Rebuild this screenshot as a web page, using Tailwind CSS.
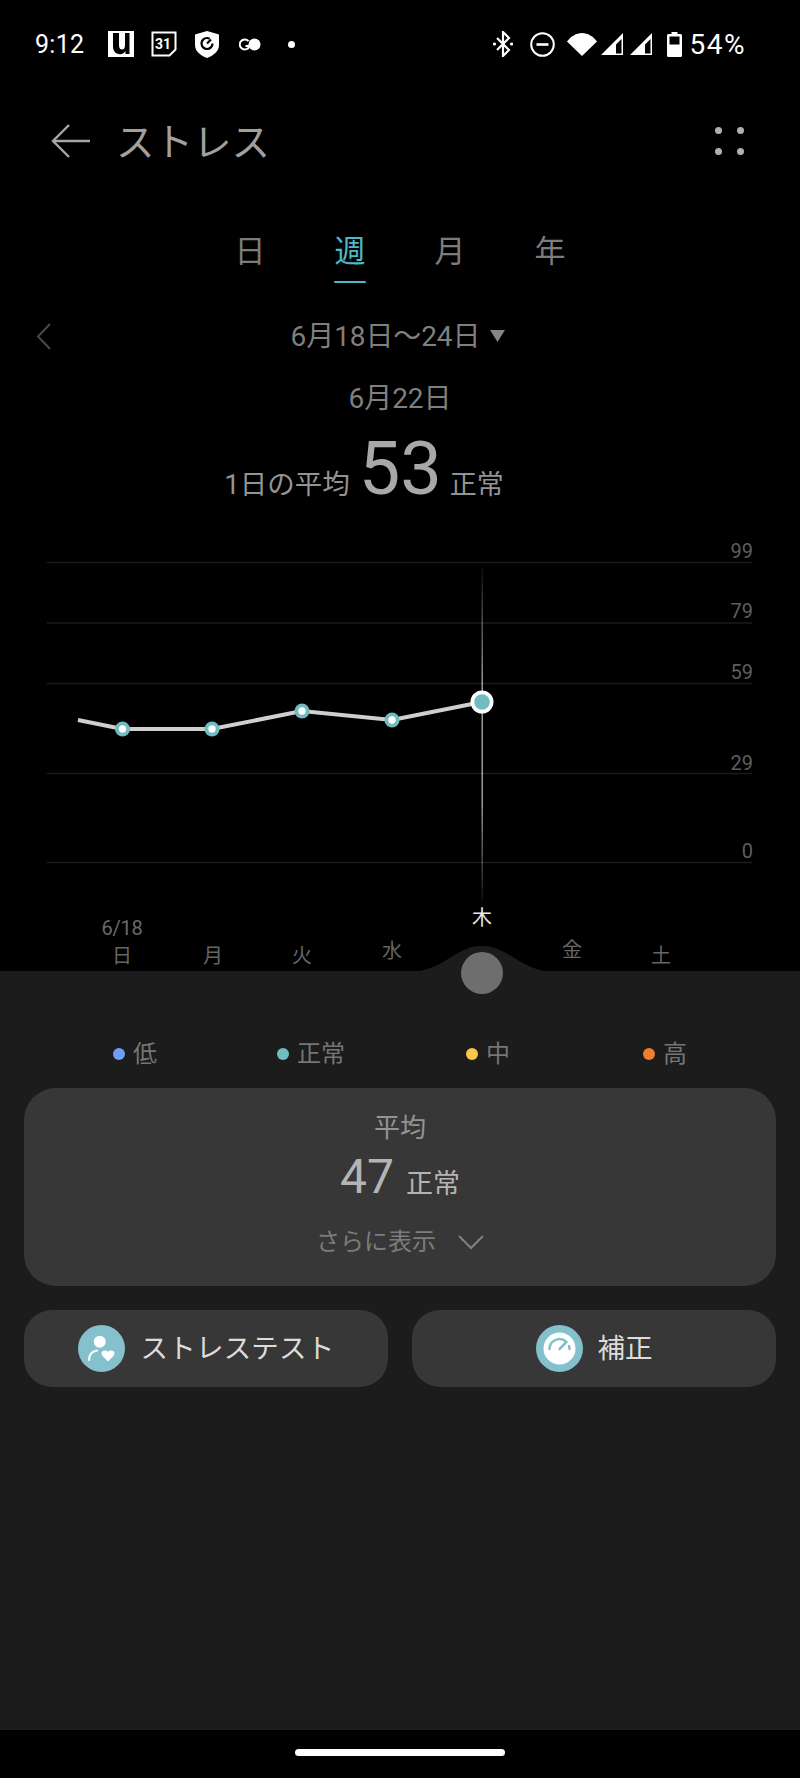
<!DOCTYPE html>
<html lang="ja"><head><meta charset="utf-8">
<script src="https://cdn.jsdelivr.net/npm/@tailwindcss/browser@4"></script>
</head>
<body class="bg-black">
<div class="w-[800px] h-[1778px] bg-black flex flex-col overflow-hidden font-['Roboto','Noto_Sans_CJK_JP',sans-serif] font-normal">
  <!-- status bar -->
  <div class="h-[88px] shrink-0 flex items-center text-white pl-[35px] pr-[54px]">
    <span class="text-[25px] w-[47px] tracking-[0.3px] pt-[1px]">9:12</span>
    <svg class="ml-[26px]" width="26" height="26" viewBox="0 0 26 26"><rect width="26" height="26" fill="#fff"/><path d="M5 2h6v12c0 3 1 4.500 3 4.500s3-1.500 3-4.500V2h4.500v21h-4v-3c-1 2-3 3.200-5.500 3.200C7.500 23.200 5 20 5 15z" fill="#000"/></svg>
    <svg class="ml-[17px]" width="26" height="26" viewBox="0 0 26 26"><path d="M1.500 1.500h23v17l-6 6h-17z" fill="none" stroke="#fff" stroke-width="2"/><text x="12" y="18" font-size="14" font-weight="700" fill="#fff" text-anchor="middle" font-family="Roboto">31</text></svg>
    <svg class="ml-[18px]" width="24" height="27" viewBox="0 0 24 27"><path d="M12 0l12 3.500V14c0 6-5 10.500-12 13C5 24.500 0 20 0 14V3.500z" fill="#fff"/><circle cx="12" cy="12.500" r="5.500" fill="none" stroke="#000" stroke-width="2.200" stroke-dasharray="28 7"/><path d="M12 12.500l4-4" stroke="#000" stroke-width="2.200"/></svg>
    <svg class="ml-[20px]" width="22" height="13" viewBox="0 0 22 13"><path d="M9.500 3.200A5 5 0 1 0 10.500 8H6.500" fill="none" stroke="#fff" stroke-width="2"/><circle cx="15.500" cy="6.500" r="6" fill="#fff"/></svg>
    <span class="ml-[27px] w-[7px] h-[7px] rounded-full bg-white"></span>
    <div class="flex-1"></div>
    <svg width="20" height="26" viewBox="0 0 20 26"><path d="M4 7l12 12-6 6V1l6 6L4 19" fill="none" stroke="#fff" stroke-width="2.200"/><circle cx="1.500" cy="13" r="1.600" fill="#fff"/><circle cx="18.500" cy="13" r="1.600" fill="#fff"/></svg>
    <svg class="ml-[17px]" width="25" height="25" viewBox="0 0 25 25"><circle cx="12.500" cy="12.500" r="11.300" fill="none" stroke="#fff" stroke-width="2"/><rect x="6.500" y="11.200" width="12" height="2.600" fill="#fff"/></svg>
    <svg class="ml-[12px]" width="30" height="23" viewBox="0 0 30 23"><path d="M0 8.500C4 3.500 9 0 15 0s11 3.500 15 8.500L15 23z" fill="#fff"/></svg>
    <svg class="ml-[3px]" width="24" height="24" viewBox="0 0 24 24"><path d="M1 23L23 1v22z M16 21.500h5.500V7L16 12.500z" fill="#fff" fill-rule="evenodd"/></svg>
    <svg class="ml-[5px]" width="24" height="24" viewBox="0 0 24 24"><path d="M1 23L23 1v22z M16 21.500h5.500V7L16 12.500z" fill="#fff" fill-rule="evenodd"/></svg>
    <svg class="ml-[14px]" width="15" height="25" viewBox="0 0 15 25"><path d="M4.500 0h6v2h3a1.500 1.500 0 0 1 1.500 1.500V23.500a1.500 1.500 0 0 1-1.500 1.500h-12A1.500 1.500 0 0 1 0 23.500V3.500A1.500 1.500 0 0 1 1.500 2h3z" fill="#fff"/><rect x="2.500" y="4.500" width="10" height="8" fill="#000"/></svg>
    <span class="ml-[8px] text-[28px] tracking-[1.5px] pt-[1px]">54%</span>
  </div>
  <!-- header -->
  <div class="h-[106px] shrink-0 flex items-center pl-[51px] pr-[56px] text-[#a0a0a0]">
    <svg width="40" height="36" viewBox="0 0 40 36"><path d="M39 18H2M18 2L2 18l16 16" fill="none" stroke="#a6a6a6" stroke-width="2.400"/></svg>
    <span class="ml-[25px] text-[38.5px] leading-none pt-[4px]">ストレス</span>
    <div class="flex-1"></div>
    <div class="grid grid-cols-2 gap-x-[15px] gap-y-[14px]">
      <span class="w-[7px] h-[7px] rounded-full bg-[#b0b0b0]"></span><span class="w-[7px] h-[7px] rounded-full bg-[#b0b0b0]"></span>
      <span class="w-[7px] h-[7px] rounded-full bg-[#b0b0b0]"></span><span class="w-[7px] h-[7px] rounded-full bg-[#b0b0b0]"></span>
    </div>
  </div>
  <!-- tabs -->
  <div class="h-[89px] shrink-0 flex justify-center text-[31px] text-[#7c7c7c]">
    <div class="w-[100px] text-center pt-[39px] leading-[38px]">日</div>
    <div class="w-[100px] flex flex-col items-center pt-[39px] text-[#4fb8c8]"><span class="leading-[38px]">週</span><span class="mt-[10px] w-[32px] h-[4px] rounded-full bg-[#4fb8c8]"></span></div>
    <div class="w-[100px] text-center pt-[39px] leading-[38px]">月</div>
    <div class="w-[100px] text-center pt-[39px] leading-[38px]">年</div>
  </div>
  <!-- date row -->
  <div class="relative h-[64px] shrink-0 mt-[21px] pr-[4px] flex items-center justify-center text-[28px] text-[#7f7f7f]">
    <svg class="absolute left-[36px] top-[19px]" width="15" height="27" viewBox="0 0 15 27"><path d="M14 1L2 13.500 14 26" fill="none" stroke="#4a4a4a" stroke-width="2"/></svg>
    <span class="leading-none tracking-[-0.1px] pt-[2px]">6月18日〜24日</span>
    <svg class="ml-[10px]" width="15" height="12" viewBox="0 0 15 12"><path d="M0 0h15L7.500 12z" fill="#858585"/></svg>
  </div>
  <div class="text-center text-[28px] h-[34px] leading-[34px] text-[#7f7f7f] mt-[14px]">6月22日</div>
  <div class="h-[85px] shrink-0 pt-[16px] pr-[72px] flex justify-center items-baseline text-[#939393]">
    <span class="text-[27.5px]">1日の平均</span>
    <span class="text-[74px] leading-[74px] ml-[9px] mr-[8px] text-[#a8a8a8]">53</span>
    <span class="text-[27px]">正常</span>
  </div>
  <!-- chart -->
  <div class="relative h-[470px] shrink-0">
    <svg class="absolute left-0 top-0" width="800" height="470" viewBox="0 501 800 470">
      <defs><linearGradient id="v" x1="0" y1="0" x2="0" y2="1"><stop offset="0" stop-color="#fff" stop-opacity="0.05"/><stop offset="0.35" stop-color="#fff" stop-opacity="0.6"/><stop offset="0.7" stop-color="#fff" stop-opacity="0.6"/><stop offset="1" stop-color="#fff" stop-opacity="0.05"/></linearGradient></defs>
      <g stroke="#1b1b1b" stroke-width="1.500">
        <path d="M47 562.500H752M47 623H752M47 683.500H752M47 773.500H752M47 862.500H752"/>
      </g>
      <rect x="481.500" y="568" width="1.500" height="334" fill="url(#v)"/>
      <path d="M78 720L122.500 729H212L302 711 392 720 482 702" fill="none" stroke="#cfcfcf" stroke-width="4"/>
      <g fill="#6fbcc2">
        <circle cx="122.500" cy="729" r="7.500"/><circle cx="212" cy="729" r="7.500"/><circle cx="302" cy="711" r="7.500"/><circle cx="392" cy="720" r="7.500"/>
      </g>
      <g fill="#fff">
        <circle cx="122.500" cy="729" r="3.700"/><circle cx="212" cy="729" r="3.700"/><circle cx="302" cy="711" r="3.700"/><circle cx="392" cy="720" r="3.700"/>
        <circle cx="482" cy="702" r="11.500"/>
      </g>
      <circle cx="482" cy="702" r="7.800" fill="#6fbcc2"/>
    </svg>
    <div class="absolute right-[47px] top-[38px] text-[20px] leading-6 text-[#5e5e5e]">99</div>
    <div class="absolute right-[47px] top-[98px] text-[20px] leading-6 text-[#5e5e5e]">79</div>
    <div class="absolute right-[47px] top-[159px] text-[20px] leading-6 text-[#5e5e5e]">59</div>
    <div class="absolute right-[47px] top-[250px] text-[20px] leading-6 text-[#5e5e5e]">29</div>
    <div class="absolute right-[47px] top-[338px] text-[20px] leading-6 text-[#5e5e5e]">0</div>
    <div class="absolute left-[82px] top-[415px] w-[80px] text-center text-[20px] tracking-[-0.3px] leading-6 text-[#6a6a6a]">6/18</div>
    <div class="absolute left-[82px] top-[443px] w-[80px] text-center text-[20px] leading-6 text-[#666]">日</div>
    <div class="absolute left-[173px] top-[443px] w-[80px] text-center text-[20px] leading-6 text-[#666]">月</div>
    <div class="absolute left-[262px] top-[443px] w-[80px] text-center text-[20px] leading-6 text-[#666]">火</div>
    <div class="absolute left-[352px] top-[438px] w-[80px] text-center text-[20px] leading-6 text-[#666]">水</div>
    <div class="absolute left-[442px] top-[405px] w-[80px] text-center text-[20px] leading-6 text-[#e8e8e8]">木</div>
    <div class="absolute left-[532px] top-[437px] w-[80px] text-center text-[20px] leading-6 text-[#666]">金</div>
    <div class="absolute left-[621px] top-[443px] w-[80px] text-center text-[20px] leading-6 text-[#666]">土</div>
  </div>
  <!-- lower panel -->
  <div class="relative h-[807px] shrink-0 bg-[#1c1c1c] px-[24px] flex flex-col">
    <svg class="absolute left-[404px] top-[-26px]" width="156" height="27" viewBox="0 0 156 27"><path d="M0 27H4C40 27 50 1 78 1s38 26 74 26H156z" fill="#1c1c1c"/></svg>
    <span class="absolute left-[461px] top-[-19px] w-[42px] h-[42px] rounded-full bg-[#6e6e6e]"></span>
    <div class="h-[117px] shrink-0 relative text-[24px] text-[#767676] leading-[30px]">
      <div class="absolute left-[89px] top-[68px] flex items-center gap-[8px]"><span class="w-[12px] h-[12px] rounded-full bg-[#6c9ff5]"></span>低</div>
      <div class="absolute left-[253px] top-[68px] flex items-center gap-[8px]"><span class="w-[12px] h-[12px] rounded-full bg-[#6fbcc2]"></span>正常</div>
      <div class="absolute left-[442px] top-[68px] flex items-center gap-[8px]"><span class="w-[12px] h-[12px] rounded-full bg-[#f7c84a]"></span>中</div>
      <div class="absolute left-[619px] top-[68px] flex items-center gap-[8px]"><span class="w-[12px] h-[12px] rounded-full bg-[#ee7d2e]"></span>高</div>
    </div>
    <div class="h-[198px] shrink-0 rounded-[32px] bg-[#373737] flex flex-col items-center">
      <div class="mt-[23px] text-[26px] leading-[34px] text-[#949494]">平均</div>
      <div class="flex items-baseline mt-[4px] text-[#b4b4b4]">
        <span class="text-[48px] leading-[56px]">47</span>
        <span class="ml-[12px] text-[27px]">正常</span>
      </div>
      <div class="flex items-center mt-[21px] text-[24px] leading-[32px] text-[#7c7c7c]">
        さらに表示
        <svg class="ml-[22px]" width="26" height="15" viewBox="0 0 26 15"><path d="M1 1l12 12L25 1" fill="none" stroke="#808080" stroke-width="2"/></svg>
      </div>
    </div>
    <div class="flex gap-[24px] mt-[24px]">
      <div class="flex-1 h-[77px] rounded-[28px] bg-[#373737] flex items-center justify-center gap-[16px]">
        <svg width="47" height="47" viewBox="0 0 47 47"><circle cx="23.500" cy="23.500" r="23.500" fill="#85c1cc"/><circle cx="21.700" cy="16.700" r="6" fill="#fff"/><path d="M11 35c0-5 3-8.500 8-9.500" fill="none" stroke="#fff" stroke-width="2.200" stroke-linecap="round"/><path d="M30 36.500l-5.500-5.500c-1.500-1.700-1.300-3.800.3-4.900 1.700-1.100 4-.7 5.200.8 1.200-1.500 3.500-1.900 5.200-.8 1.600 1.100 1.800 3.200.3 4.900z" fill="#fff"/></svg>
        <span class="text-[27.5px] text-[#dcdcdc] tracking-[0.2px] pt-[1px]">ストレステスト</span>
      </div>
      <div class="flex-1 h-[77px] rounded-[28px] bg-[#373737] flex items-center justify-center gap-[15px]">
        <svg width="47" height="47" viewBox="0 0 47 47"><circle cx="23.500" cy="23.500" r="23.500" fill="#85c1cc"/><circle cx="23.500" cy="23.500" r="16" fill="#fff"/><path d="M13.500 24a10 10 0 0 1 17-7" fill="none" stroke="#85c1cc" stroke-width="2.500" stroke-linecap="round"/><path d="M23.500 24l6-6M33 21a10 10 0 0 1 .5 3" fill="none" stroke="#85c1cc" stroke-width="2.500" stroke-linecap="round"/></svg>
        <span class="text-[27.5px] text-[#dcdcdc] pt-[1px]">補正</span>
      </div>
    </div>
    <div class="flex-1"></div>
    <div class="h-[48px] mx-[-24px] bg-black shrink-0 flex justify-center pt-[19px]">
      <span class="w-[210px] h-[7px] rounded-full bg-white"></span>
    </div>
  </div>
</div>
</body></html>
